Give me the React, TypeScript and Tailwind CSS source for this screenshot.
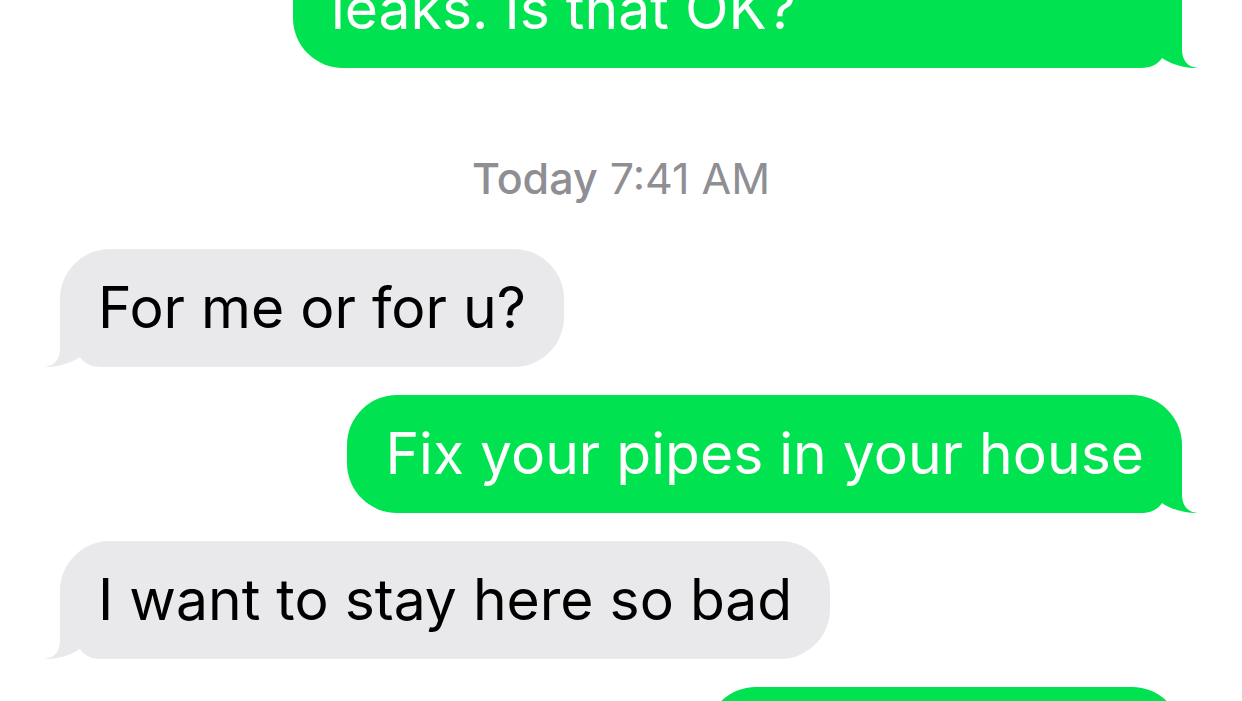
import React from 'react';

// Chat bubble tail, drawn for the right side and mirrored for the left
const Tail = ({ side }: { side: 'left' | 'right' }) => {
  const cls =
    side === 'right'
      ? 'absolute bottom-0 -right-4 fill-[#00e24f]'
      : 'absolute bottom-0 -left-4 -scale-x-100 fill-[#e9e9eb]';
  return (
    <svg width="66" height="50" viewBox="0 0 66 50" className={cls}>
      <path d="M50 0 L50 31 C50 42 55 49 66 50 C58 50.5 41 48 30 40 C26 46 20 50 8 50 L0 50 Z" />
    </svg>
  );
};

const Sent = ({ children, className = '' }: { children?: React.ReactNode; className?: string }) => (
  <div className="flex justify-end pr-[60px]">
    <div
      className={`relative rounded-[50px] bg-[#00e24f] px-[38px] py-[27px] text-[57px] leading-[64px] text-white ${className}`}
    >
      {children}
      <Tail side="right" />
    </div>
  </div>
);

const Received = ({ children }: { children: React.ReactNode }) => (
  <div className="flex justify-start pl-[60px]">
    <div className="relative rounded-[50px] bg-[#e9e9eb] px-[38px] py-[27px] text-[57px] leading-[64px] text-black">
      {children}
      <Tail side="left" />
    </div>
  </div>
);

export default function App() {
  return (
    <div
      className="h-[701px] w-[1242px] overflow-hidden bg-white"
      style={{ fontFamily: 'Inter, "Noto Sans", sans-serif' }}
    >
      <div className="-mt-[50px] flex flex-col">
        <Sent className="w-[889px]">leaks. Is that OK?</Sent>

        <div className="mt-[85px] mb-[46px] text-center text-[43px] leading-[50px] text-[#8e8e93]">
          <span className="font-medium">Today</span> 7:41 AM
        </div>

        <div className="flex flex-col gap-[28px]">
          <Received>For me or for u?</Received>
          <Sent>Fix your pipes in your house</Sent>
          <Received>I want to stay here so bad</Received>
          <Sent className="h-[118px] w-[476px]" />
        </div>
      </div>
    </div>
  );
}
